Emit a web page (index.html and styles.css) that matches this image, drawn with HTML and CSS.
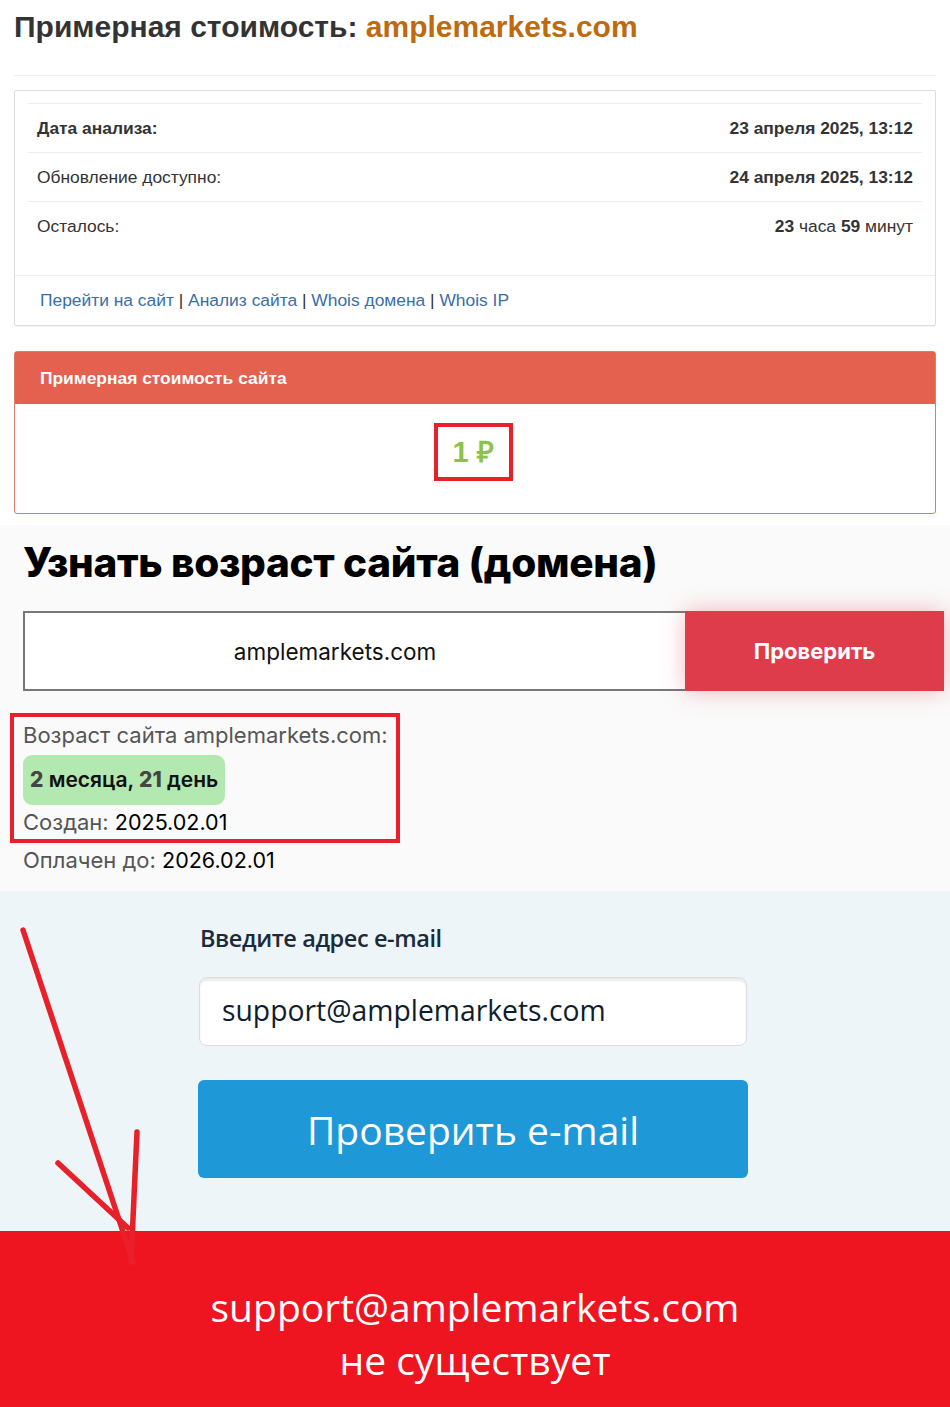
FILE: index.html
```html
<!DOCTYPE html>
<html lang="ru">
<head>
  <meta charset="UTF-8" />
  <meta name="viewport" content="width=device-width, initial-scale=1.0"/>
  <title>Примерная стоимость: amplemarkets.com</title>
  <link rel="stylesheet" href="styles.css">
</head>
<body>
  <div class="page">

    <div class="cost">
      <h1>Примерная стоимость: <span class="domain">amplemarkets.com</span></h1>
      <hr>

      <div class="panel">
        <table class="info">
          <tr>
            <td><strong>Дата анализа:</strong></td>
            <td class="right"><strong>23 апреля 2025, 13:12</strong></td>
          </tr>
          <tr>
            <td>Обновление доступно:</td>
            <td class="right"><strong>24 апреля 2025, 13:12</strong></td>
          </tr>
          <tr>
            <td>Осталось:</td>
            <td class="right"><strong>23</strong> часа <strong>59</strong> минут</td>
          </tr>
        </table>
        <div class="panel-footer">
          <a href="#">Перейти на сайт</a> | <a href="#">Анализ сайта</a> | <a href="#">Whois домена</a> | <a href="#">Whois IP</a>
        </div>
      </div>

      <div class="price-panel">
        <div class="price-head">Примерная стоимость сайта</div>
        <div class="price-body">
          <span class="price mark">1 ₽</span>
        </div>
      </div>
    </div>

    <div class="age">
      <h2>Узнать возраст сайта (домена)</h2>
      <div class="age-form">
        <input type="text" class="age-input" value="amplemarkets.com">
        <button class="age-btn">Проверить</button>
      </div>
      <div class="age-result mark">
        <div class="line">Возраст сайта amplemarkets.com:</div>
        <div class="badge"><b>2</b> месяца, <b>21</b> день</div>
        <div class="line">Создан: <span class="val">2025.02.01</span></div>
      </div>
      <div class="line">Оплачен до: <span class="val">2026.02.01</span></div>
    </div>

    <div class="email">
      <div class="email-inner">
        <label for="email">Введите адрес e-mail</label>
        <input type="text" id="email" value="support@amplemarkets.com">
        <button class="email-btn">Проверить e-mail</button>
      </div>
    </div>

    <div class="verdict">
      support@amplemarkets.com<br>
      не существует
    </div>

    <svg class="arrow" width="950" height="1407" viewBox="0 0 950 1407">
      <path d="M23 930 L133 1262" />
      <path d="M137 1132 L131 1262" />
      <path d="M58 1163 L128 1228" />
    </svg>
  </div>
</body>
</html>
```

FILE: styles.css
```css
body {
  margin: 0;
  background: #fff;
}

.page {
  position: relative;
  width: 950px;
  min-height: 1407px;
  overflow: hidden;
}

.mark {
  border: 4px solid #e8202a;
}

/* --- cost block --- */
.cost {
  font-family: 'Liberation Sans', Arial, sans-serif;
  color: #333;
  padding: 0 14px 11px 14px;
}

h1 {
  margin: 0;
  padding-top: 8px;
  font-size: 30px;
  line-height: 38px;
  color: #333;
}

.domain {
  color: #bd6a10;
}

hr {
  margin: 29px 0 14px 0;
  border: none;
  border-top: 1px solid #eee;
}

.panel {
  border: 1px solid #ddd;
  border-radius: 2px;
  box-shadow: 0 1px 1px rgba(0,0,0,0.05);
  padding: 12px 13px 0 13px;
}

.info {
  width: 100%;
  border-collapse: collapse;
  font-size: 17.4px;
  margin-bottom: 25px;
}

.info td {
  border-top: 1px solid #eee;
  padding: 15px 9px 14px 9px;
  line-height: 19px;
}

.info .right {
  text-align: right;
}

.panel-footer {
  margin: 0 -13px;
  border-top: 1px solid #eee;
  padding: 15px 25px 15px 25px;
  font-size: 17.4px;
  line-height: 19px;
}

.panel-footer a {
  color: #3b6ea8;
  text-decoration: none;
}

.price-panel {
  margin-top: 25px;
  border: 1px solid #e07a6e;
  border-radius: 3px;
}

.price-head {
  background: #e4604f;
  color: #fff;
  font-weight: bold;
  font-size: 17.4px;
  height: 52px;
  line-height: 52px;
  padding-left: 25px;
}

.price-body {
  height: 109px;
  display: flex;
  justify-content: center;
  align-items: flex-start;
  padding-top: 19px;
  box-sizing: border-box;
}

.price {
  display: inline-block;
  width: 79px;
  height: 58px;
  margin-left: -4px;
  box-sizing: border-box;
  text-align: center;
  line-height: 50px;
  font-size: 29px;
  font-weight: bold;
  color: #8bc34a;
}

/* --- domain age --- */
.age {
  background: #fafafa;
  font-family: 'Inter', 'Noto Sans', sans-serif;
  padding: 16px 6px 14px 23px;
}

h2 {
  margin: 0;
  font-size: 40.5px;
  line-height: 44px;
  font-weight: 800;
  color: #000;
  letter-spacing: -0.3px;
}

.age-form {
  display: flex;
  margin-top: 26px;
  height: 80px;
}

.age-input {
  width: 662px;
  box-sizing: border-box;
  border: 2px solid #777;
  border-right: none;
  background: #fff;
  text-align: center;
  padding: 0 40px 0 0;
  font-family: inherit;
  font-size: 22.5px;
  color: #111;
  outline: none;
}

.age-btn {
  flex: 1;
  border: none;
  background: #de3c4b;
  color: #fff;
  font-family: inherit;
  font-size: 22px;
  font-weight: 700;
  box-shadow: 0 0 22px rgba(222, 60, 75, 0.35);
  cursor: pointer;
}

.age-result {
  margin: 22px 0 0 -13px;
  width: 390px;
  box-sizing: border-box;
  padding: 2px 0 0 9px;
  white-space: nowrap;
}

.line {
  font-size: 22px;
  line-height: 34px;
  color: #555;
  white-space: nowrap;
}

.age-result .line:first-child {
  line-height: 32px;
}

.val {
  color: #000;
  font-size: 21.5px;
}

.badge {
  display: inline-block;
  margin-top: 4px;
  height: 50px;
  line-height: 50px;
  padding: 0 7px;
  border-radius: 9px;
  background: #b3e8b0;
  font-size: 21px;
  font-weight: 600;
  color: #111;
}

.badge b {
  color: #444;
  font-weight: 800;
}

/* --- email check --- */
.email {
  background: #eef5f9;
  font-family: 'Open Sans', 'Noto Sans', sans-serif;
  padding: 32px 0 53px 198px;
}

.email-inner {
  width: 550px;
  display: flex;
  flex-direction: column;
}

.email label {
  display: block;
  margin-left: 2px;
  font-size: 23.5px;
  font-weight: 600;
  line-height: 30px;
  color: #1c2b39;
  letter-spacing: -0.4px;
}

.email input {
  margin: 24px 0 0 1px;
  width: 548px;
  height: 69px;
  box-sizing: border-box;
  border: 1px solid #ddd;
  border-radius: 8px;
  box-shadow: inset 0 3px 2px rgba(0,0,0,0.08);
  padding: 0 22px 3px 22px;
  font-family: inherit;
  font-size: 28.3px;
  color: #0f1e2c;
  outline: none;
}

.email-btn {
  margin-top: 34px;
  height: 98px;
  border: none;
  border-radius: 6px;
  background: #1e98d6;
  color: #fff;
  font-family: inherit;
  font-size: 39px;
  cursor: pointer;
}

/* --- result --- */
.verdict {
  background: #ef1520;
  color: #fff;
  font-family: 'Open Sans', 'Noto Sans', sans-serif;
  font-size: 39px;
  line-height: 53px;
  text-align: center;
  padding: 49px 0 31px 0;
}

.arrow {
  position: absolute;
  left: 0;
  top: 0;
  pointer-events: none;
}

.arrow path {
  stroke: #e8202a;
  stroke-width: 5.5;
  stroke-linecap: round;
  fill: none;
}
```
